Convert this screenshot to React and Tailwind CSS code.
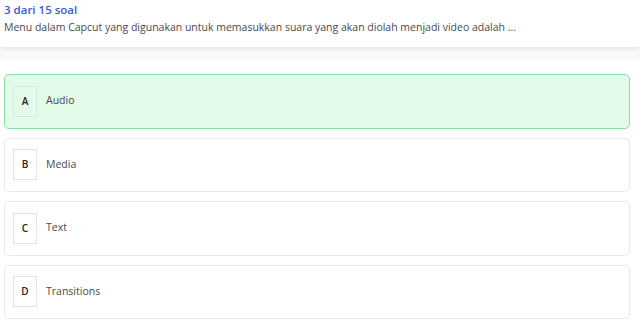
import React from "react";

const options = [
  { key: "A", label: "Audio", selected: true },
  { key: "B", label: "Media" },
  { key: "C", label: "Text" },
  { key: "D", label: "Transitions" },
];

const App = () => {
  return (
    <div className="min-h-[324px] bg-white font-['Open_Sans',sans-serif]">
      <div className="relative z-10 bg-white px-[4px] pt-[2px] pb-[10px] shadow-[0_2px_4px_rgba(0,0,0,0.08)] h-[47px]">
        <div className="text-[11.5px] font-semibold text-[#3b5bdb] leading-[15px]">
          3 dari 15 soal
        </div>
        <div className="mt-[3px] text-[10.5px] text-[#4a4a4a] leading-[14px]">
          Menu dalam Capcut yang digunakan untuk memasukkan suara yang akan diolah menjadi video adalah ...
        </div>
      </div>
      <div className="h-[13px] bg-[#f7f8fa]" />
      <div className="flex flex-col gap-[9px] pl-[4px] pr-[10px] pt-[14px]">
        {options.map((o) => (
          <div
            key={o.key}
            className={
              o.selected
                ? "flex items-center h-[54.5px] rounded-[5px] border border-[#86dfa3] bg-[#e3fbe9] pl-[8px]"
                : "flex items-center h-[54.5px] rounded-[5px] border border-[#e8e8ec] bg-white pl-[8px]"
            }
          >
            <div className="flex h-[31px] w-[24px] items-center justify-center border border-[#e2e4e8] text-[10px] font-semibold text-[#222]">
              {o.key}
            </div>
            <div className="ml-[9px] text-[10.5px] text-[#4a4a4a]">{o.label}</div>
          </div>
        ))}
      </div>
    </div>
  );
};

export default App;
